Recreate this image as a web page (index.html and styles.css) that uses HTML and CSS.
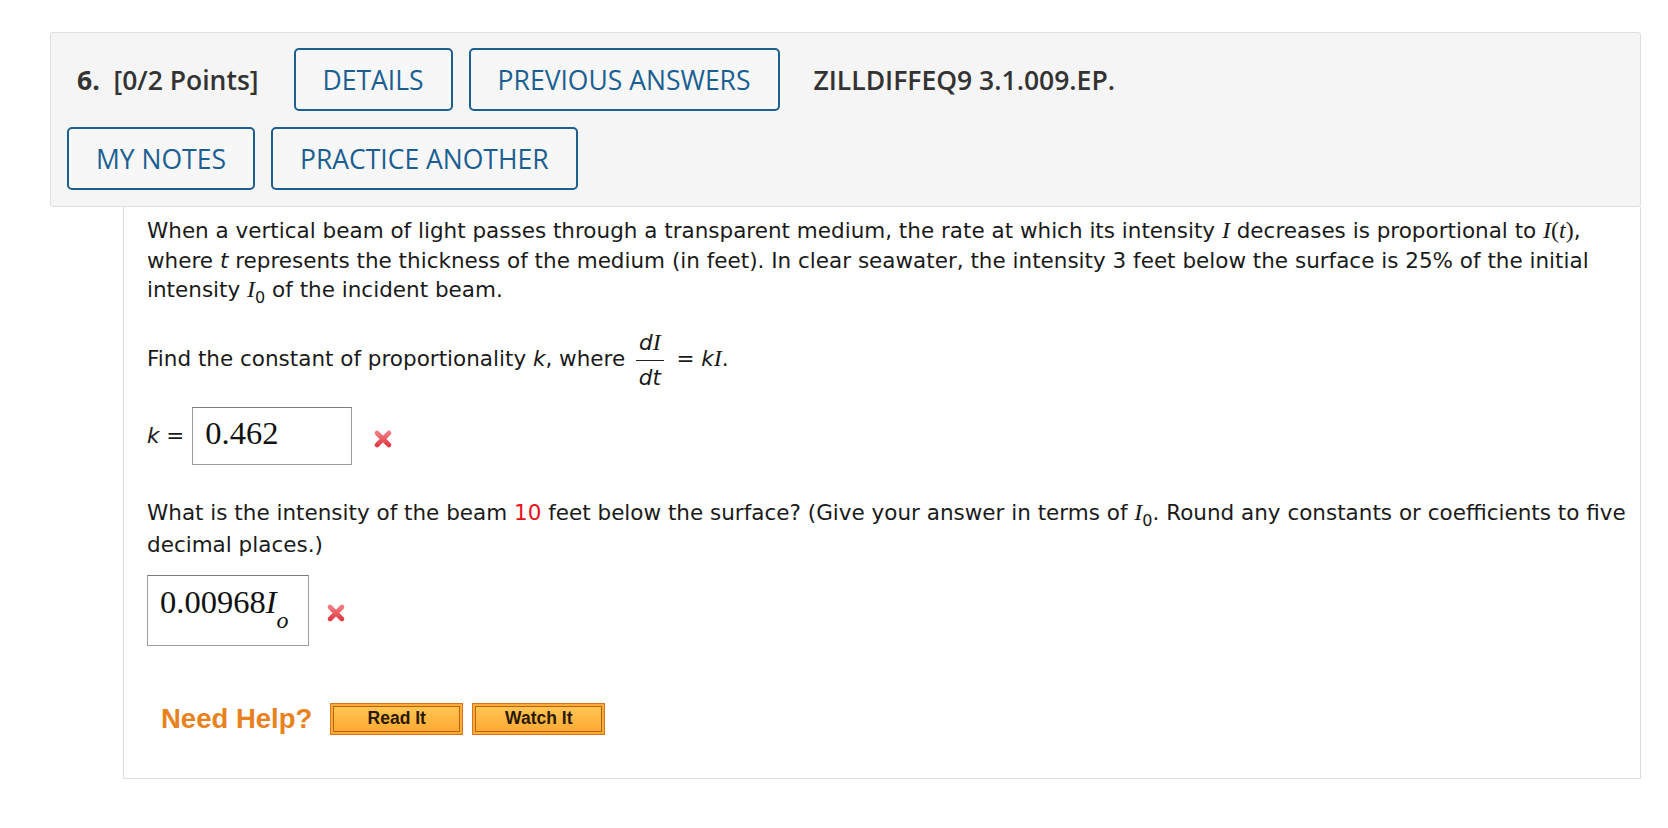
FILE: index.html
```html
<!DOCTYPE html>
<html>
<head>
<meta charset="utf-8">
<link rel="stylesheet" href="styles.css">
</head>
<body>
<div class="question">
  <div class="q-header">
    <div class="row">
      <span class="qnum"><b>6.</b>&nbsp; [0/2 Points]</span>
      <span class="btn">DETAILS</span>
      <span class="btn">PREVIOUS ANSWERS</span>
      <span class="qcode">ZILLDIFFEQ9 3.1.009.EP.</span>
    </div>
    <div class="row">
      <span class="btn">MY NOTES</span>
      <span class="btn">PRACTICE ANOTHER</span>
    </div>
  </div>
  <div class="q-body">
    <p class="para">When a vertical beam of light passes through a transparent medium, the rate at which its intensity <span class="mi">I</span> decreases is proportional to <span class="ms"><span class="mi">I</span>(<i>t</i>)</span>, where <i>t</i> represents the thickness of the medium (in feet). In clear seawater, the intensity 3 feet below the surface is 25% of the initial intensity <span class="mi">I</span><sub>0</sub> of the incident beam.</p>

    <div class="find">Find the constant of proportionality <i>k</i>, where <span class="frac"><span class="fnum"><i>d</i><span class="mi">I</span></span><span class="fden"><i>dt</i></span></span> = <i>k</i><span class="mi">I</span>.</div>

    <div class="answer-row ans1">
      <span class="lbl"><i>k</i> =</span>
      <span class="inbox box1"><span class="val">0.462</span></span>
      <svg class="xmark" viewBox="0 0 20 20" width="20" height="20"><defs><linearGradient id="xg" x1="0" y1="0" x2="0" y2="1"><stop offset="0" stop-color="#f47a80"/><stop offset="1" stop-color="#e23c45"/></linearGradient></defs><path d="M4 4 L16 16 M16 4 L4 16" stroke="url(#xg)" stroke-width="4.6" stroke-linecap="round"/></svg>
    </div>

    <p class="para para2">What is the intensity of the beam <span class="red">10</span> feet below the surface? (Give your answer in terms of <span class="mi">I</span><sub>0</sub>. Round any constants or coefficients to five decimal places.)</p>

    <div class="answer-row ans2">
      <span class="inbox box2"><span class="val">0.00968<i>I</i><sub class="vsub">o</sub></span></span>
      <svg class="xmark" viewBox="0 0 20 20" width="20" height="20"><path d="M4 4 L16 16 M16 4 L4 16" stroke="url(#xg)" stroke-width="4.6" stroke-linecap="round"/></svg>
    </div>

    <div class="help">
      <span class="need">Need Help?</span>
      <span class="hbtn"><span class="hin">Read It</span></span>
      <span class="hbtn"><span class="hin">Watch It</span></span>
    </div>
  </div>
</div>
</body>
</html>
```

FILE: styles.css
```css
* { box-sizing: border-box; }
html, body { margin: 0; padding: 0; background: #ffffff; }
body { font-family: "DejaVu Sans", Verdana, sans-serif; color: #1a1a1a; }

.question {
  margin: 32px 27px 0 50px;
}

.q-header {
  background: #f5f5f5;
  border: 1px solid #dedede;
  border-radius: 3px;
  padding: 15px 16px 16px 16px;
  display: flex;
  flex-direction: column;
  gap: 16px;
}

.row {
  display: flex;
  align-items: center;
  gap: 16px;
}

.qnum {
  font-family: "Open Sans", sans-serif;
  font-weight: 600;
  font-size: 26.5px;
  color: #333333;
  margin: 0 19px 0 10px;
}
.qnum b { font-weight: 700; }

.qcode {
  font-family: "Open Sans", sans-serif;
  font-weight: 650;
  font-size: 26.5px;
  color: #333333;
  margin-left: 18px;
}

.btn {
  display: inline-flex;
  align-items: center;
  justify-content: center;
  height: 63px;
  padding: 0 27px;
  border: 2px solid #1f5f8f;
  border-radius: 5px;
  font-family: "Open Sans", sans-serif;
  font-weight: 500;
  font-size: 26.5px;
  color: #1b5f92;
  background: #f7f7f7;
}

.q-body {
  margin-left: 73px;
  border: 1px solid #dcdcdc;
  border-top: none;
  height: 572px;
  padding: 9px 8px 0 23px;
  font-size: 21.5px;
}

.para {
  margin: 0;
  line-height: 29.5px;
}

.mi {
  font-family: "Liberation Serif", serif;
  font-style: italic;
  font-size: 24px;
}
.ms { font-family: "Liberation Serif", serif; font-size: 24px; }
.ms i { font-family: "Liberation Serif", serif; }

sub {
  font-size: 16px;
  vertical-align: -6px;
  line-height: 0;
}

.red { color: #e8101a; }

.find {
  margin-top: 23px;
  line-height: 29.5px;
}

.frac {
  display: inline-flex;
  flex-direction: column;
  align-items: center;
  vertical-align: middle;
  margin: 0 6px 0 4px;
  line-height: 29px;
}
.fnum {
  border-bottom: 1px solid #222;
  padding: 0 3px 3px;
}
.fden {
  padding-top: 2px;
}

.answer-row {
  display: flex;
  align-items: center;
}

.ans1 { margin-top: 15px; }

.lbl { margin-right: 8px; }

.inbox {
  display: inline-flex;
  align-items: center;
  border: 1px solid #9c9c9c;
  border-top-color: #7d7d7d;
  background: #fff;
  font-family: "Liberation Serif", serif;
  font-size: 32.5px;
  color: #111;
}

.box1 {
  width: 160px;
  height: 58px;
  padding-left: 12px;
  padding-bottom: 4px;
}

.box2 {
  width: 162px;
  height: 71px;
  padding-left: 12px;
  padding-bottom: 16px;
}

.vsub {
  font-size: 24px;
  font-style: italic;
  font-family: "Liberation Serif", serif;
  vertical-align: -15px;
}

.xmark { margin-left: 21px; margin-top: 6px; }
.ans2 .xmark { margin-left: 17px; }

.para2 {
  margin-top: 31px;
  line-height: 32px;
}

.ans2 { margin-top: 14px; }

.help {
  display: flex;
  align-items: center;
  margin-top: 57px;
  margin-left: 14px;
}

.need {
  font-family: "Liberation Sans", Arial, sans-serif;
  font-weight: bold;
  font-size: 27.5px;
  color: #e8821e;
  margin-right: 18px;
}

.hbtn {
  display: inline-flex;
  width: 133px;
  height: 32px;
  padding: 2px;
  border: 1px solid #d8741a;
  background: #ffab38;
  margin-right: 9px;
}

.hin {
  flex: 1;
  display: flex;
  align-items: center;
  justify-content: center;
  border: 1px solid #b8650f;
  background: linear-gradient(#ffc453, #ffab33);
  font-family: "Liberation Sans", Arial, sans-serif;
  font-weight: bold;
  font-size: 17.5px;
  color: #2a1a05;
}
```
